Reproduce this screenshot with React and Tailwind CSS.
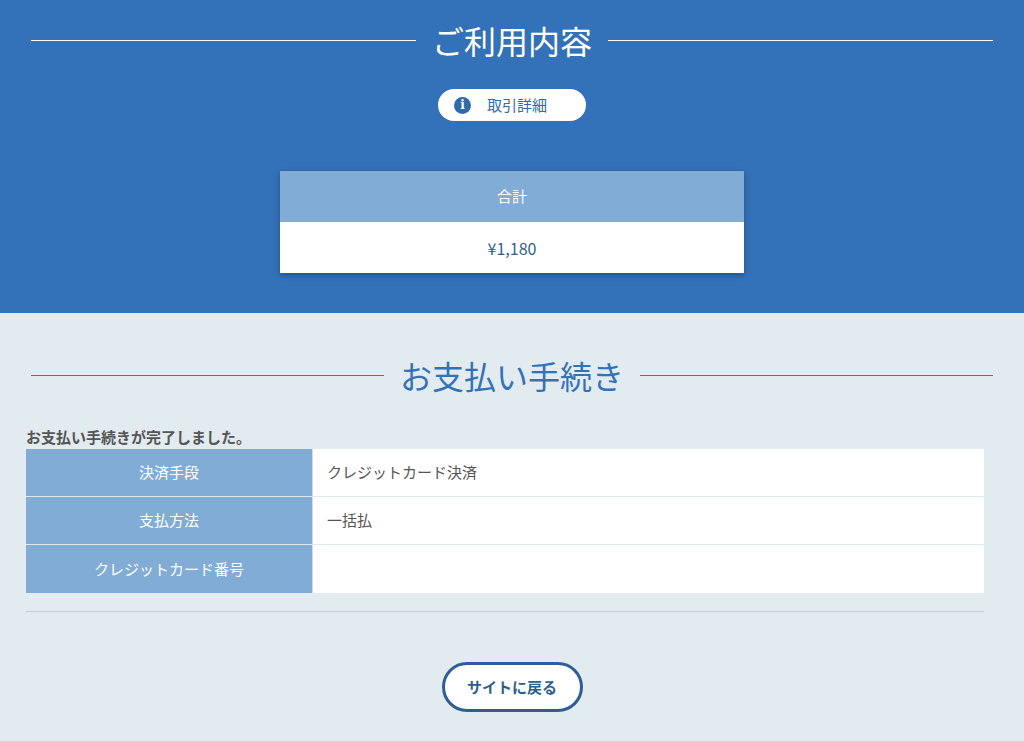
export default function App() {
  const f = { fontFamily: '"Noto Sans CJK JP", "Noto Sans", sans-serif' };
  return (
    <div style={f} className="w-[1024px] h-[741px] overflow-hidden bg-[#e2ebef]">
      <div className="bg-[#3372b8] h-[313px] pt-[18px]">
        <div className="flex items-center px-[31px] gap-[16px]">
          <div className="flex-1 h-px bg-white" />
          <h1 className="text-white text-[32px] leading-[44px]">ご利用内容</h1>
          <div className="flex-1 h-px bg-white" />
        </div>
        <div className="flex justify-center mt-[27px]">
          <div className="bg-white rounded-full h-[32px] w-[148px] flex items-center pl-[16px] gap-[16px] text-[#2f6aa9] text-[15px]">
            <span className="w-[17px] h-[17px] rounded-full bg-[#2f6aa9] text-white text-[12px] font-bold flex items-center justify-center" style={{fontFamily:'"DejaVu Serif", serif'}}>i</span>
            取引詳細
          </div>
        </div>
        <div className="mx-auto mt-[50px] w-[464px] shadow-[0_2px_6px_rgba(0,0,0,0.3)]">
          <div className="h-[51px] bg-[#80acd6] text-white text-[15px] flex items-center justify-center">合計</div>
          <div className="h-[51px] bg-white text-[#2f5f8c] text-[16px] flex items-center justify-center">¥1,180</div>
        </div>
      </div>
      <div className="pt-[40px] px-[26px]">
        <div className="flex items-center px-[5px] gap-[16px]">
          <div className="flex-1 h-px bg-[#3c78b9]" />
          <h2 className="text-[#3372b8] text-[32px] leading-[44px]">お支払い手続き</h2>
          <div className="flex-1 h-px bg-[#3c78b9]" />
        </div>
        <p className="mt-[28px] text-[#555] font-bold text-[15px] leading-[24px]">お支払い手続きが完了しました。</p>
        <div className="w-[958px]">
          {[["決済手段","クレジットカード決済"],["支払方法","一括払"],["クレジットカード番号",""]].map(([a,b])=>(
            <div key={a} className="flex h-[48px] border-b border-[#dde8ef] last:border-b-0">
              <div className="w-[287px] bg-[#80acd6] text-white text-[15px] flex items-center justify-center border-r border-[#c9dced]">{a}</div>
              <div className="flex-1 bg-white text-[#555] text-[15px] flex items-center pl-[14px]">{b}</div>
            </div>
          ))}
        </div>
        <div className="w-[958px] h-px bg-[#c4ccd0] mt-[18px]" />
        <div className="flex justify-center mt-[50px]">
          <div className="h-[50px] w-[141px] rounded-full border-[3px] border-[#2d5f96] bg-white flex items-center justify-center text-[#2d5f8c] font-bold text-[15px]">サイトに戻る</div>
        </div>
      </div>
    </div>
  );
}
